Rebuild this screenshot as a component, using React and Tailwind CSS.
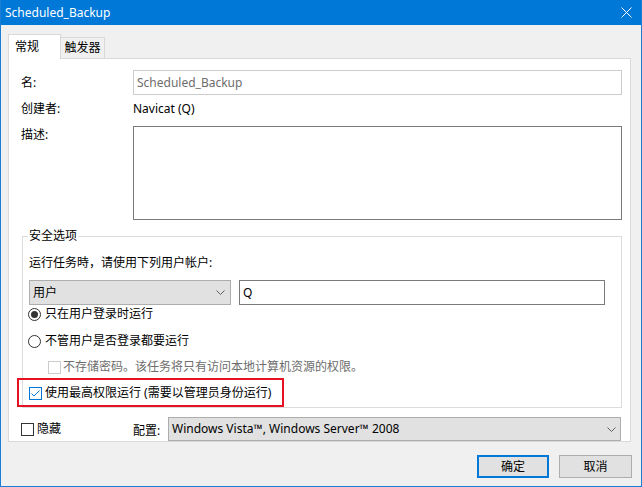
import React from "react";

function Chevron() {
  return (
    <svg width="9" height="5" viewBox="0 0 9 5" className="shrink-0">
      <path d="M0.5 0.5L4.5 4.5L8.5 0.5" fill="none" stroke="#606060" strokeWidth="1" />
    </svg>
  );
}

function Checkbox({ checked, disabled, blue }) {
  const border = disabled ? "border-[#cccccc]" : blue ? "border-[#0078d7]" : "border-[#333333]";
  return (
    <div className={`w-[13px] h-[13px] border ${border} bg-white shrink-0 flex items-center justify-center`}>
      {checked && (
        <svg width="11" height="11" viewBox="0 0 11 11">
          <path d="M1.5 5.5L4 8L9.5 2.5" fill="none" stroke={blue ? "#0078d7" : "#333333"} strokeWidth="1" />
        </svg>
      )}
    </div>
  );
}

function Radio({ checked }) {
  return (
    <div className="w-[13px] h-[13px] rounded-full border border-[#333333] bg-white shrink-0 flex items-center justify-center">
      {checked && <div className="w-[7px] h-[7px] rounded-full bg-[#333333]" />}
    </div>
  );
}

export default function App() {
  return (
    <div className="w-[642px] h-[487px] bg-[#f0f0f0] border-x border-b border-[#1a7fd4] flex flex-col text-[12px] leading-[16px] text-black overflow-hidden font-['Noto_Sans','Noto_Sans_CJK_SC',sans-serif]">
      {/* Title bar */}
      <div className="h-[25px] shrink-0 bg-[#0078d7] flex items-center justify-between pl-[4px] pr-[9px] text-white">
        <span className="text-[12px] leading-[16px]">Scheduled_Backup</span>
        <svg width="11" height="11" viewBox="0 0 11 11">
          <path d="M0.5 0.5L10.5 10.5M10.5 0.5L0.5 10.5" stroke="white" strokeWidth="1" />
        </svg>
      </div>

      {/* Tabs */}
      <div className="mt-[9px] h-[24px] shrink-0 flex items-end pl-[7px]">
        <div className="relative z-10 -mb-px h-[25px] w-[53px] bg-white border border-b-0 border-[#d9d9d9] flex items-center pl-[6px]">
          <span>常规</span>
        </div>
        <div className="h-[21px] w-[44px] border border-l-0 border-b-0 border-[#d9d9d9] flex items-center justify-center">
          <span>触发器</span>
        </div>
      </div>

      {/* Panel */}
      <div className="ml-[7px] w-[623px] h-[384px] shrink-0 bg-white border border-[#d9d9d9] pl-[12px] flex flex-col">
        {/* Name */}
        <div className="mt-[11px] h-[25px] flex items-center">
          <div className="w-[112px]">名:</div>
          <div className="w-[489px] h-[25px] border border-[#cccccc] pl-[3px] flex items-center text-[#6d6d6d]">
            Scheduled_Backup
          </div>
        </div>
        {/* Creator */}
        <div className="mt-[6px] h-[16px] flex items-center">
          <div className="w-[112px]">创建者:</div>
          <div>Navicat (Q)</div>
        </div>
        {/* Description */}
        <div className="mt-[9px] flex items-start">
          <div className="w-[112px] mt-[1px]">描述:</div>
          <div className="w-[489px] h-[94px] border border-[#7a7a7a] bg-white" />
        </div>

        {/* Security group */}
        <div className="relative mt-[16px] ml-[1px] w-[600px] h-[172px] border border-[#dcdcdc] pl-[6px] flex flex-col">
          <span className="absolute left-[5px] -top-[9px] bg-white px-[1px] leading-[16px]">安全选项</span>

          <div className="mt-[18px] h-[16px] flex items-center">运行任务時，请使用下列用户帐户:</div>

          <div className="mt-[9px] h-[25px] flex items-center gap-[8px]">
            <div className="w-[202px] h-[25px] bg-[#e1e1e1] border border-[#adadad] flex items-center justify-between pl-[3px] pr-[5px]">
              <span>用户</span>
              <Chevron />
            </div>
            <div className="w-[366px] h-[25px] border border-[#7a7a7a] bg-white flex items-center pl-[3px]">Q</div>
          </div>

          <div className="mt-[1px] h-[16px] flex items-center gap-[4px] -ml-[1px]">
            <Radio checked />
            <span>只在用户登录时运行</span>
          </div>

          <div className="mt-[11px] h-[16px] flex items-center gap-[4px] -ml-[1px]">
            <Radio />
            <span>不管用户是否登录都要运行</span>
          </div>

          <div className="mt-[10px] h-[16px] flex items-center gap-[2px] pl-[19px] text-[#6d6d6d]">
            <Checkbox disabled />
            <span>不存储密码。该任务将只有访问本地计算机资源的权限。</span>
          </div>

          <div className="mt-[10px] h-[16px] flex items-center gap-[3px]">
            <Checkbox checked blue />
            <span>使用最高权限运行 (需要以管理员身份运行)</span>
          </div>

          <div className="pointer-events-none absolute -left-[6px] top-[141px] w-[267px] h-[29px] border-2 border-[#e81123]" />
        </div>

        {/* Hidden + config */}
        <div className="mt-[9px] h-[24px] flex items-center">
          <div className="w-[112px] flex items-center gap-[3px]">
            <Checkbox />
            <span>隐藏</span>
          </div>
          <div className="w-[35px] mt-[4px]">配置:</div>
          <div className="w-[453px] h-[24px] bg-[#e1e1e1] border border-[#adadad] flex items-center justify-between pl-[3px] pr-[4px]">
            <span>Windows Vista™, Windows Server™ 2008</span>
            <Chevron />
          </div>
        </div>
      </div>

      {/* Buttons */}
      <div className="mt-[13px] flex justify-end gap-[10px] pr-[9px]">
        <div className="w-[72px] h-[23px] bg-[#e1e1e1] border-2 border-[#0078d7] flex items-center justify-center">确定</div>
        <div className="w-[73px] h-[23px] bg-[#e1e1e1] border border-[#adadad] flex items-center justify-center">取消</div>
      </div>
    </div>
  );
}
